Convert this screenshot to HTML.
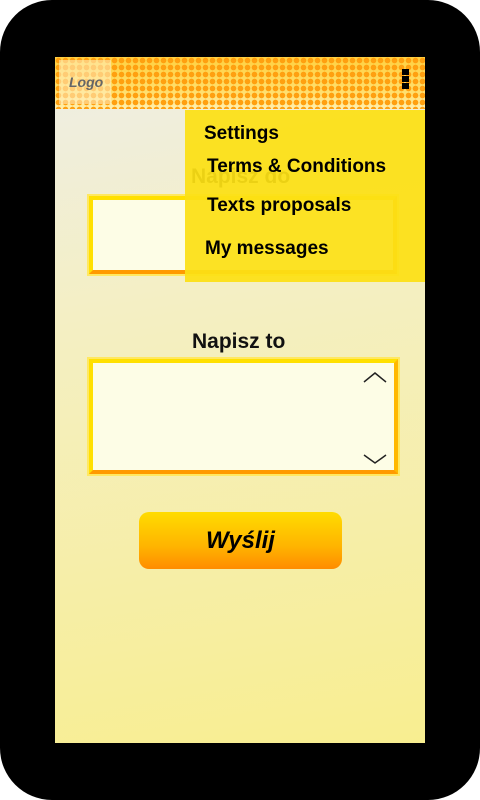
<!DOCTYPE html>
<html><head><style>
body{margin:0;width:480px;height:800px;background:#fff;font-family:"Liberation Sans",sans-serif;}
.phone{position:absolute;left:0;top:0;width:480px;height:800px;background:#000;border-radius:52px;}
.screen{position:absolute;left:55px;top:57px;width:370px;height:686px;background:linear-gradient(170deg,#eeeee6 0%,#f4efc4 35%,#f8ee90 100%);overflow:hidden;}
.hdr{position:absolute;left:0;top:0;width:370px;height:52px;background:radial-gradient(circle,#ffa010 2.6px,transparent 3px) 0 0/7px 7px,linear-gradient(#ffd040,#ffe070 70%,#fff0b0);}
.logo{position:absolute;left:4px;top:3px;width:52px;height:44px;background:rgba(255,240,200,.55);font:italic bold 14px "Liberation Sans",sans-serif;color:#666;line-height:44px;text-indent:10px}
.dots{position:absolute;left:347px;top:12px;width:8px}
.dots i{display:block;width:7px;height:6px;background:#000;margin-bottom:1px}
.lbl{position:absolute;font-weight:bold;font-size:21px;color:#111;}
.box{position:absolute;background:#fdfde6;border:4px solid #ffe000;border-right-color:#ffb800;border-bottom-color:#ff9a00;box-shadow:0 0 0 2px #ffe860;}
.menu{position:absolute;left:130px;top:53px;width:240px;height:172px;background:rgba(252,224,20,.93);}
.menu div{position:absolute;font-weight:bold;font-size:19px;color:#000;}
.btn{position:absolute;left:84px;top:455px;width:203px;height:57px;border-radius:10px;background:linear-gradient(#ffdc00,#ffb400 60%,#ff8c00);text-align:center;font:italic bold 24px "Liberation Sans",sans-serif;line-height:57px;}
</style></head><body>
<div class="phone"></div>
<div class="screen">
<div class="hdr"><div class="logo">Logo</div><div class="dots"><i></i><i></i><i></i></div></div>
<div class="lbl" style="left:136px;top:108px">Napisz do</div>
<div class="box" style="left:34px;top:139px;width:300px;height:70px"></div>
<div class="lbl" style="left:137px;top:273px">Napisz to</div>
<div class="box" style="left:34px;top:302px;width:301px;height:107px">
<svg style="position:absolute;right:6px;top:6px" width="26" height="100"><path d="M2 13L13 4L24 13" stroke="#222" stroke-width="1.5" fill="none"/><path d="M2 86L13 94L24 86" stroke="#222" stroke-width="1.5" fill="none"/></svg></div>
<div class="menu">
<div style="left:19px;top:13px">Settings</div>
<div style="left:22px;top:46px">Terms &amp; Conditions</div>
<div style="left:22px;top:85px">Texts proposals</div>
<div style="left:20px;top:128px">My messages</div>
</div>
<div class="btn">Wyślij</div>
</div>
</body></html>
